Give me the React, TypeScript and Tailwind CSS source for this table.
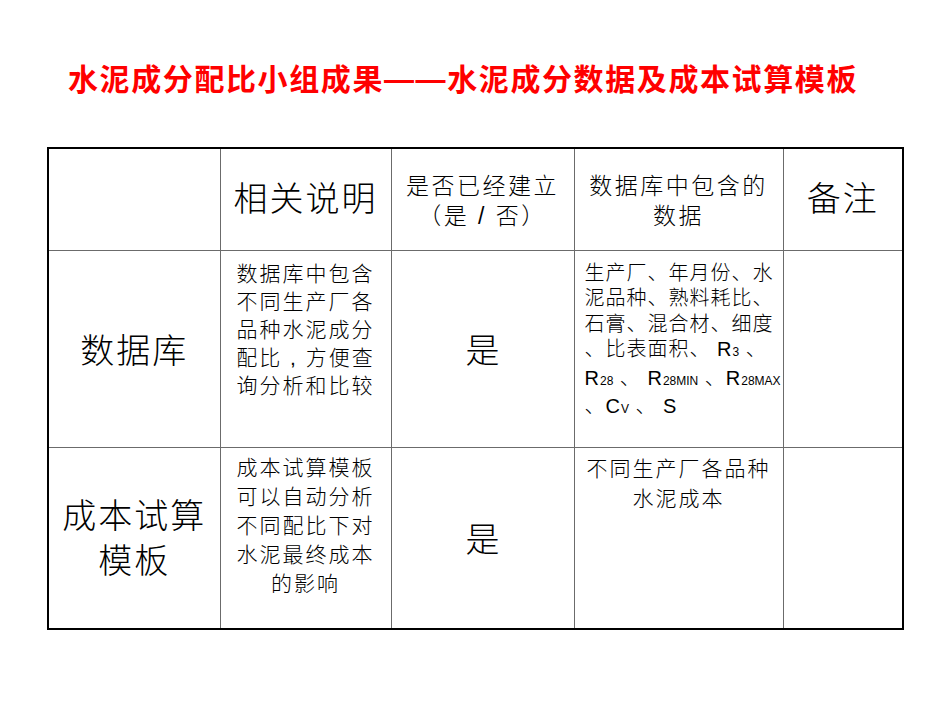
import React from "react";

const F = { fontFamily: '"Liberation Sans", "Noto Sans CJK SC", sans-serif' };

function Sub({ children }: { children: React.ReactNode }) {
  return <span className="text-[12px] tracking-normal">{children}</span>;
}

export default function App() {
  const cell = "border-r border-b border-[#6b6b6b] p-0 align-middle";
  return (
    <div className="w-[950px] h-[713px] bg-white text-black" style={F}>
      <div className="pt-[62px] flex justify-center pr-[24px]">
        <h1 className="text-[30px] leading-[36px] font-bold text-[#ff0000] tracking-[1.6px]">
          水泥成分配比小组成果——水泥成分数据及成本试算模板
        </h1>
      </div>
      <div className="ml-[47px] mt-[49px] w-[857px] border-2 border-black font-light">
        <table className="table-fixed border-collapse w-full">
          <colgroup>
            <col className="w-[171px]" />
            <col className="w-[171px]" />
            <col className="w-[183px]" />
            <col className="w-[209px]" />
            <col />
          </colgroup>
          <tbody>
            <tr className="h-[101px]">
              <td className={cell}></td>
              <td className={cell + " text-center text-[34px] tracking-[2px]"}>相关说明</td>
              <td className={cell + " text-center text-[23px] leading-[30px] tracking-[2.5px] pt-[3px]"}>
                是否已经建立
                <br />
                （是 / 否）
              </td>
              <td className={cell + " text-center text-[23px] leading-[30px] tracking-[2.5px] pt-[3px]"}>
                数据库中包含的
                <br />
                数据
              </td>
              <td className="border-b border-[#6b6b6b] text-center text-[34px] tracking-[2px] align-middle">备注</td>
            </tr>
            <tr className="h-[197px]">
              <td className={cell + " text-center text-[34px] tracking-[2px] pt-[6px]"}>数据库</td>
              <td className={cell + " align-top text-center text-[21px] leading-[28px] tracking-[2px] pt-[9px]"}>
                数据库中包含
                <br />
                不同生产厂各
                <br />
                品种水泥成分
                <br />
                配比 , 方便查
                <br />
                询分析和比较
              </td>
              <td className={cell + " text-center text-[34px] pt-[6px]"}>是</td>
              <td className={cell + " align-top text-left text-[20px] leading-[25.5px] tracking-[1px] pt-[10px] pl-[10px] whitespace-nowrap"}>
                生产厂、年月份、水
                <br />
                泥品种、熟料耗比、
                <br />
                石膏、混合材、细度
                <br />
                、比表面积、 R<Sub>3</Sub> 、
                <br />
                R<Sub>28</Sub> 、 R<Sub>28MIN</Sub> 、R<Sub>28MAX</Sub>
                <br />
                、C<Sub>V</Sub> 、 S
              </td>
              <td className="border-b border-[#6b6b6b]"></td>
            </tr>
            <tr className="h-[181px]">
              <td className={cell + " border-b-0 text-center text-[34px] leading-[45px] tracking-[2px] pt-[2px]"}>
                成本试算
                <br />
                模板
              </td>
              <td className={cell + " border-b-0 align-top text-center text-[21px] leading-[29px] tracking-[2px] pt-[5px]"}>
                成本试算模板
                <br />
                可以自动分析
                <br />
                不同配比下对
                <br />
                水泥最终成本
                <br />
                的影响
              </td>
              <td className={cell + " border-b-0 text-center text-[34px] pt-[6px]"}>是</td>
              <td className={cell + " border-b-0 align-top text-center text-[21px] leading-[30px] tracking-[2px] pt-[6px]"}>
                不同生产厂各品种
                <br />
                水泥成本
              </td>
              <td></td>
            </tr>
          </tbody>
        </table>
      </div>
    </div>
  );
}
